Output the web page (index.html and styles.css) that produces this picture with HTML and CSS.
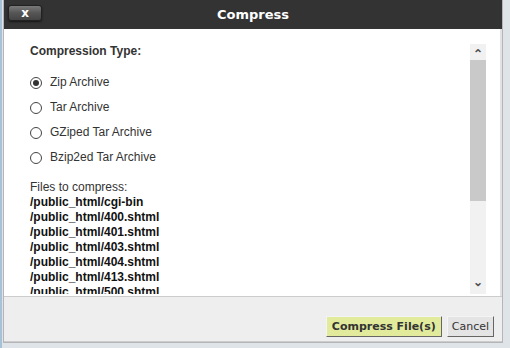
FILE: index.html
```html
<!DOCTYPE html>
<html lang="en">
<head>
    <meta charset="UTF-8">
    <title>Compress</title>
    <link rel="stylesheet" href="styles.css">
</head>
<body>
    <div class="dialog">
        <div class="titlebar">
            <div class="titlebar-left">
                <button class="close-btn">x</button>
            </div>
            <h2 class="title">Compress</h2>
            <div></div>
        </div>

        <div class="content">
            <div class="scroll-box">
                <div class="scroll-inner">
                    <div class="section-title">Compression Type:</div>
                    <div class="options">
                        <label class="option"><input type="radio" name="type" checked> Zip Archive</label>
                        <label class="option"><input type="radio" name="type"> Tar Archive</label>
                        <label class="option"><input type="radio" name="type"> GZiped Tar Archive</label>
                        <label class="option"><input type="radio" name="type"> Bzip2ed Tar Archive</label>
                    </div>
                    <div class="files-title">Files to compress:</div>
                    <div class="files">
                        <div>/public_html/cgi-bin</div>
                        <div>/public_html/400.shtml</div>
                        <div>/public_html/401.shtml</div>
                        <div>/public_html/403.shtml</div>
                        <div>/public_html/404.shtml</div>
                        <div>/public_html/413.shtml</div>
                        <div>/public_html/500.shtml</div>
                    </div>
                </div>
                <div class="scrollbar">
                    <div class="sb-arrow">&#8963;</div>
                    <div class="sb-track">
                        <div class="sb-thumb"></div>
                    </div>
                    <div class="sb-arrow down">&#8964;</div>
                </div>
            </div>
        </div>

        <div class="footer">
            <button class="btn btn-primary">Compress File(s)</button>
            <button class="btn">Cancel</button>
        </div>
    </div>
</body>
</html>
```

FILE: styles.css
```css
body {
    margin: 0;
    padding-left: 1px;
    width: 507px;
    height: 348px;
    overflow: hidden;
    background-color: #dfe4e9;
    border-left: 2px solid #a7c1d6;
    font-family: "Liberation Sans", Arial, sans-serif;
}

.dialog {
    width: 498px;
    height: 342px;
    border: 1px solid #b5b5b5;
    border-top: none;
    background-color: #eee;
    display: flex;
    flex-direction: column;
}

.titlebar {
    height: 29px;
    flex-shrink: 0;
    background-color: #333;
    display: grid;
    grid-template-columns: 1fr auto 1fr;
    align-items: center;
}

.titlebar-left {
    align-self: start;
    padding: 3px 0 0 4px;
}

.close-btn {
    width: 34px;
    height: 16px;
    padding: 0;
    border: 1px solid #222;
    border-radius: 3px;
    background: linear-gradient(#7a7a7a, #555 50%, #444);
    box-shadow: 0 1px 2px rgba(0, 0, 0, 0.6);
    color: #fff;
    font-family: "DejaVu Sans", Verdana, sans-serif;
    font-size: 12px;
    font-weight: bold;
    line-height: 12px;
}

.title {
    margin: 0;
    color: #fff;
    font-family: "DejaVu Sans", Verdana, sans-serif;
    font-size: 13px;
    font-weight: bold;
    padding-bottom: 1px;
}

.content {
    height: 267px;
    flex-shrink: 0;
    background-color: #fff;
    border-right: 2px solid #e2e2e2;
    padding: 15px 14px 2px 16px;
    box-sizing: border-box;
}

.scroll-box {
    height: 250px;
    display: flex;
}

.scroll-inner {
    flex: 1;
    overflow: hidden;
    padding-left: 10px;
    color: #333;
    font-size: 12px;
    line-height: 15px;
}

.section-title {
    font-weight: bold;
}

.options {
    margin: 11px 0 10px;
}

.option {
    display: flex;
    align-items: center;
    gap: 8px;
    height: 25px;
}

.option input {
    appearance: none;
    margin: 0;
    width: 12px;
    height: 12px;
    border: 1px solid #444;
    border-radius: 50%;
    background-color: #fff;
    display: grid;
    place-content: center;
}

.option input:checked::before {
    content: "";
    width: 6px;
    height: 6px;
    border-radius: 50%;
    background-color: #333;
}

.files {
    font-weight: bold;
    color: #111;
}

.scrollbar {
    width: 16px;
    display: flex;
    flex-direction: column;
    background-color: #f1f1f1;
}

.sb-arrow {
    height: 16px;
    flex-shrink: 0;
    text-align: center;
    color: #505050;
    font-size: 12px;
    font-weight: bold;
    line-height: 20px;
}

.sb-arrow.down {
    line-height: 8px;
}

.sb-track {
    flex: 1;
}

.sb-thumb {
    height: 141px;
    background-color: #c9c9c9;
}

.footer {
    flex: 1;
    border-top: 1px solid #ccc;
    border-bottom: 1px solid #ccc;
    display: flex;
    justify-content: flex-end;
    align-items: flex-end;
    gap: 5px;
    padding: 0 8px 4px 0;
}

.btn {
    height: 21px;
    padding: 0 4px;
    border: 1px solid;
    border-color: #f4f4f4 #666 #666 #f4f4f4;
    background-color: #e4e4e4;
    color: #333;
    font-family: "DejaVu Sans", Verdana, sans-serif;
    font-size: 11px;
}

.btn-primary {
    background-color: #e2eb9c;
    font-weight: bold;
    padding: 0 5px;
}
```
